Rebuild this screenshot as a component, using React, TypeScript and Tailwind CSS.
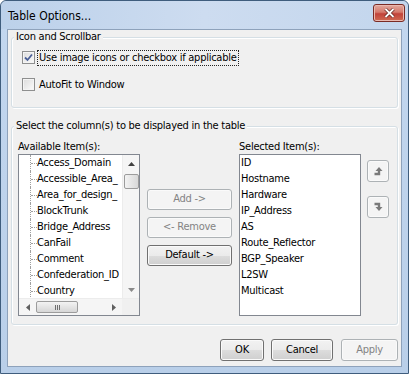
import React from 'react';

const available = [
  'Access_Domain',
  'Accessible_Area_',
  'Area_for_design_',
  'BlockTrunk',
  'Bridge_Address',
  'CanFail',
  'Comment',
  'Confederation_ID',
  'Country',
];

const selected = [
  'ID',
  'Hostname',
  'Hardware',
  'IP_Address',
  'AS',
  'Route_Reflector',
  'BGP_Speaker',
  'L2SW',
  'Multicast',
];

function CheckBox({ checked }: { checked?: boolean }) {
  return (
    <span className="w-[13px] h-[13px] shrink-0 border border-[#8e8f8f] bg-linear-to-br from-[#dcdcdc] to-[#fbfbfb] shadow-[inset_0_0_0_1px_#f4f4f4] flex items-center justify-center">
      {checked && (
        <svg width="9" height="9" viewBox="0 0 9 9">
          <path d="M1 4.5 L3.5 7 L8 1.5" fill="none" stroke="#4a5f97" strokeWidth="1.8" />
        </svg>
      )}
    </span>
  );
}

function Btn({ children, disabled, className }: { children?: React.ReactNode; disabled?: boolean; className: string }) {
  const look = disabled
    ? 'border-[#adb2b5] bg-[#f4f4f4] text-[#838383]'
    : 'border-[#707070] bg-[linear-gradient(#f2f2f2_0%,#ebebeb_50%,#dddddd_51%,#cfcfcf_100%)] text-black';
  return (
    <div className={`${className} ${look} shrink-0 flex items-center justify-center rounded-[3px] border shadow-[inset_0_0_0_1px_#fafafa]`}>
      {children}
    </div>
  );
}

function Group({ title, className, children }: { title: string; className: string; children: React.ReactNode }) {
  return (
    <div className={`${className} relative w-[387px] border border-[#d5dfe5] rounded-[3px] shadow-[inset_1px_1px_0_#fff,1px_1px_0_#fff]`}>
      <span className="absolute left-[2px] -top-[8px] px-[2px] bg-[#f0f0f0] leading-[14px]">{title}</span>
      {children}
    </div>
  );
}

function Triangle({ dir, color }: { dir: 'up' | 'down' | 'left' | 'right'; color: string }) {
  const pts = {
    up: '0,4 3.5,0 7,4',
    down: '0,0 3.5,4 7,0',
    left: '4,0 0,3.5 4,7',
    right: '0,0 4,3.5 0,7',
  }[dir];
  const w = dir === 'up' || dir === 'down' ? 7 : 4;
  const h = dir === 'up' || dir === 'down' ? 4 : 7;
  return (
    <svg width={w} height={h} viewBox={`0 0 ${w} ${h}`}>
      <polygon points={pts} fill={color} />
    </svg>
  );
}

function MoveIcon({ up }: { up?: boolean }) {
  return (
    <svg width="10" height="10" viewBox="0 0 10 10">
      {up ? (
        <>
          <path d="M1.5 8 H6 V4" fill="none" stroke="#7a7a7a" strokeWidth="2.4" />
          <polygon points="2.5,5 6,1 9.5,5" fill="#7a7a7a" />
        </>
      ) : (
        <>
          <path d="M1.5 2 H6 V6" fill="none" stroke="#7a7a7a" strokeWidth="2.4" />
          <polygon points="2.5,5 6,9 9.5,5" fill="#7a7a7a" />
        </>
      )}
    </svg>
  );
}

export default function App() {
  return (
    <div className="w-[409px] h-[374px] font-[family-name:'DejaVu_Sans_Condensed','Liberation_Sans',sans-serif] text-[11px] tracking-[-0.25px] text-black overflow-hidden">
      <div className="w-full h-full flex flex-col border border-[#3f5d7d] rounded-t-[6px] bg-linear-to-b from-[#c3d7ef] to-[#b9cfe9]">
        {/* title bar */}
        <div className="h-[28px] shrink-0 flex items-center justify-between pl-[7px] pr-[3px] bg-linear-to-r from-[#bcd1ea] via-[#cddcf0] to-[#c3d6ed] rounded-t-[6px]">
          <span className="text-[12px] leading-[16px] pt-[1px] tracking-normal">Table Options...</span>
          <div className="w-[32px] h-[18px] -mt-[4px] rounded-[3px] border border-[#7a2b25] bg-[linear-gradient(#e2a99e_0%,#d5796c_45%,#c1433a_55%,#d06a52_100%)] flex items-center justify-center shadow-[inset_0_0_0_1px_#eab9b0]">
            <svg width="11" height="10" viewBox="0 0 11 10">
              <path d="M1.5 1 L9.5 9 M9.5 1 L1.5 9" stroke="#5a1d18" strokeWidth="3.2" />
              <path d="M1.5 1 L9.5 9 M9.5 1 L1.5 9" stroke="#ffffff" strokeWidth="1.8" />
            </svg>
          </div>
        </div>

        {/* frame + client */}
        <div className="flex-1 px-[6px] pb-[6px] flex">
          <div className="flex-1 border border-[#8ea2bb] bg-[#f0f0f0] pl-[3px] pt-[7px] flex flex-col">
            <Group title="Icon and Scrollbar" className="h-[71px] pt-[13px] pl-[10px]">
              <div className="flex items-center h-[13px]">
                <CheckBox checked />
                <span className="ml-[2px] px-[1px] h-[16px] leading-[14px] border border-dotted border-[#222] whitespace-nowrap">
                  Use image icons or checkbox if applicable
                </span>
              </div>
              <div className="flex items-center h-[13px] mt-[14px]">
                <CheckBox />
                <span className="ml-[3px] px-[1px] leading-[14px] whitespace-nowrap">AutoFit to Window</span>
              </div>
            </Group>

            <Group title="Select the column(s) to be displayed in the table" className="h-[199px] mt-[18px] pt-[13px] pl-[6px] flex">
              {/* available */}
              <div className="flex flex-col w-[122px]">
                <span className="h-[14px] leading-[14px]">Available Item(s):</span>
                <div className="h-[162px] border border-[#828790] bg-white flex flex-col">
                  <div className="flex h-[143px]">
                    <div className="w-[103px] overflow-hidden">
                      {available.map((a) => (
                        <div key={a} className="h-[16px] flex items-stretch">
                          <div className="ml-[11px] w-[7px] shrink-0 border-l border-dotted border-[#a0a0a0] flex items-center">
                            <div className="w-full border-t border-dotted border-[#a0a0a0]" />
                          </div>
                          <span className="leading-[16px] whitespace-nowrap">{a}</span>
                        </div>
                      ))}
                    </div>
                    <div className="w-[17px] bg-[#f5f5f5] border-l border-[#ececec] flex flex-col items-center">
                      <div className="h-[17px] flex items-center justify-center">
                        <Triangle dir="up" color="#404040" />
                      </div>
                      <div className="mt-[2px] w-[15px] h-[15px] rounded-[2px] border border-[#9c9c9c] bg-linear-to-r from-[#f3f3f3] to-[#d8d8d8]" />
                      <div className="flex-1" />
                      <div className="h-[17px] flex items-center justify-center">
                        <Triangle dir="down" color="#8a8a8a" />
                      </div>
                    </div>
                  </div>
                  <div className="flex h-[17px] border-t border-[#ececec]">
                    <div className="w-[103px] bg-[#f5f5f5] flex items-center">
                      <div className="w-[17px] flex justify-center">
                        <Triangle dir="left" color="#606060" />
                      </div>
                      <div className="w-[42px] h-[12px] rounded-[2px] border border-[#9c9c9c] bg-linear-to-b from-[#f3f3f3] to-[#d6d6d6] flex items-center justify-center gap-[1px]">
                        <span className="w-[1px] h-[5px] bg-[#6e6e6e]" />
                        <span className="w-[1px] h-[5px] bg-[#6e6e6e]" />
                        <span className="w-[1px] h-[5px] bg-[#6e6e6e]" />
                      </div>
                      <div className="flex-1" />
                      <div className="w-[17px] flex justify-center">
                        <Triangle dir="right" color="#606060" />
                      </div>
                    </div>
                    <div className="w-[17px] bg-[#f0f0f0]" />
                  </div>
                </div>
              </div>

              {/* middle buttons */}
              <div className="ml-[7px] pt-[49px] flex flex-col gap-[7px]">
                <Btn disabled className="w-[85px] h-[21px]">Add -&gt;</Btn>
                <Btn disabled className="w-[85px] h-[21px]">&lt;- Remove</Btn>
                <Btn className="w-[85px] h-[21px]">Default -&gt;</Btn>
              </div>

              {/* selected */}
              <div className="ml-[7px] flex flex-col w-[122px]">
                <span className="h-[14px] leading-[14px]">Selected Item(s):</span>
                <div className="h-[162px] border border-[#828790] bg-white pl-[1px] overflow-hidden">
                  {selected.map((s) => (
                    <div key={s} className="h-[16px] leading-[16px] whitespace-nowrap">{s}</div>
                  ))}
                </div>
              </div>

              {/* up/down */}
              <div className="ml-[6px] pt-[20px] flex flex-col gap-[14px]">
                <Btn disabled className="w-[22px] h-[22px]"><MoveIcon up /></Btn>
                <Btn disabled className="w-[22px] h-[22px]"><MoveIcon /></Btn>
              </div>
            </Group>

            <div className="mt-[14px] w-[387px] flex justify-end gap-[7px]">
              <Btn className="w-[44px] h-[22px]">OK</Btn>
              <Btn className="w-[62px] h-[22px]">Cancel</Btn>
              <Btn disabled className="w-[57px] h-[22px] ml-[1px]">Apply</Btn>
            </div>
          </div>
        </div>
      </div>
    </div>
  );
}
